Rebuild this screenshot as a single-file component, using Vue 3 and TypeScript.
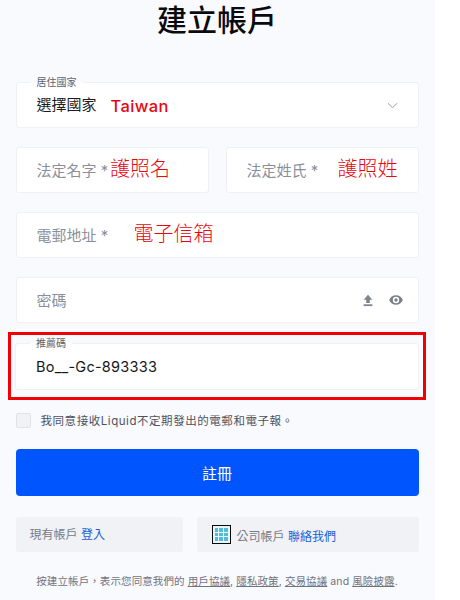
<script setup lang="ts">
const footerLinks: string[] = ['用戶協議', '隱私政策']
const windows: number[] = [0, 1, 2, 3, 4, 5, 6, 7, 8]
</script>

<template>
  <div class="page">
    <main class="form">
      <h1 class="title">建立帳戶</h1>

      <div class="field country">
        <span class="legend">居住國家</span>
        <span class="value label-w">選擇國家</span>
        <span class="note latin">Taiwan</span>
        <svg class="chevron" viewBox="0 0 12 7" width="11" height="7">
          <path d="M1 1l5 5 5-5" fill="none" stroke="#8f939c" stroke-width="1" />
        </svg>
      </div>

      <div class="row">
        <div class="field half">
          <span class="hint name-hint">法定名字 *</span>
          <span class="note big">護照名</span>
        </div>
        <div class="field half">
          <span class="hint surname-hint">法定姓氏 *</span>
          <span class="note big">護照姓</span>
        </div>
      </div>

      <div class="field email">
        <span class="hint email-hint">電郵地址 *</span>
        <span class="note big">電子信箱</span>
      </div>

      <div class="field password">
        <span class="hint">密碼</span>
        <svg class="upload" viewBox="0 0 10 13" width="10" height="13">
          <path d="M5 .8L.6 5.800h2.600V9h3.600V5.800h2.600z" fill="#80848f" />
          <rect x=".6" y="10.300" width="8.800" height="1.800" fill="#80848f" />
        </svg>
        <svg class="eye" viewBox="0 0 14 10" width="14" height="10">
          <path d="M7 .2C4 .2 1.400 2.200.2 5c1.200 2.800 3.800 4.800 6.800 4.800s5.600-2 6.800-4.800C12.600 2.200 10 .2 7 .2z" fill="#7a7e8a" />
          <circle cx="7" cy="5" r="3.200" fill="#fff" />
          <circle cx="7" cy="5" r="1.700" fill="#7a7e8a" />
        </svg>
      </div>

      <div class="highlight">
        <div class="field referral">
          <span class="legend">推薦碼</span>
          <span class="code">Bo__-Gc-893333</span>
        </div>
      </div>

      <label class="consent">
        <span class="box"></span>
        <span>我同意接收Liquid不定期發出的電郵和電子報。</span>
      </label>

      <button class="submit" type="button">註冊</button>

      <div class="cards">
        <div class="card login">
          <span>現有帳戶 <a class="link">登入</a></span>
        </div>
        <div class="card company">
          <span class="building">
            <i v-for="w in windows" :key="w" class="pane"></i>
          </span>
          <span class="company-text">公司帳戶 <a class="link">聯絡我們</a></span>
        </div>
      </div>

      <p class="terms">
        按建立帳戶，表示您同意我們的
        <template v-for="l in footerLinks" :key="l"><u>{{ l }}</u>, </template><u>交易協議</u> and <u>風險披露</u>.
      </p>
    </main>
  </div>
</template>

<style scoped>
.page {
  width: 435px;
  height: 600px;
  overflow: hidden;
  background: #f9fafd;
  font-family: Inter, "Noto Sans CJK TC", sans-serif;
}
.form {
  display: flex;
  flex-direction: column;
  padding: 0 16.500px 0 15.500px;
}
.title {
  margin: 0;
  height: 82px;
  padding-top: 1px;
  box-sizing: border-box;
  text-align: center;
  font-size: 30px;
  line-height: 38px;
  font-weight: 500;
  color: #0b0b0f;
}
.field {
  position: relative;
  display: flex;
  align-items: center;
  height: 46px;
  box-sizing: border-box;
  padding: 0 20px;
  background: #fff;
  border: 1px solid #f0f1f4;
  border-radius: 3px;
}
.legend {
  position: absolute;
  left: 14px;
  top: -7px;
  padding: 0 6px;
  font-size: 10px;
  line-height: 12px;
  color: #5f636d;
  background: linear-gradient(#f9fafd 50%, #fff 50%);
}
.country { margin-bottom: 19px; }
.value { font-size: 15px; color: #1a1c22; margin-top: -3px; }
.label-w { width: 74px; }
.note { color: #e8060f; white-space: nowrap; }
.latin { font-size: 16.500px; font-weight: 500; letter-spacing: .4px; margin-top: 1px; }
.big { font-size: 20px; line-height: 26px; margin-top: -3px; font-weight: 300; }
.chevron { margin-left: auto; margin-right: 0; }
.row {
  display: grid;
  grid-template-columns: 193px 193px;
  justify-content: space-between;
  margin-bottom: 19px;
}
.half { height: 46px; }
.hint { font-size: 15px; color: #8b8f9a; white-space: nowrap; margin-top: -2px; }
.name-hint { width: 73.500px; }
.surname-hint { width: 92px; }
.email { margin-bottom: 19px; }
.email-hint { width: 97px; }
.password { margin-bottom: 9px; }
.upload { margin-left: auto; margin-right: 16px; }
.eye { margin-right: -5px; }
.highlight {
  margin: 0 -7.500px;
  padding: 8px 4px 8px 4px;
  border: 3px solid #f00000;
  height: 68px;
  box-sizing: border-box;
}
.referral { height: 47px; }
.code { font-size: 14.500px; letter-spacing: .25px; color: #15171c; }
.consent {
  display: flex;
  align-items: center;
  gap: 10px;
  margin-top: 12px;
  font-size: 11.500px;
  color: #4e525c;
  letter-spacing: .55px;
}
.box {
  width: 15px;
  height: 15px;
  box-sizing: border-box;
  background: #f1f2f5;
  border: 1px solid #e0e2e7;
  border-radius: 2px;
}
.submit {
  height: 47px;
  margin-top: 21px;
  border: none;
  border-radius: 4px;
  background: #0055ff;
  color: #fff;
  font: inherit;
  font-size: 15px;
}
.cards {
  display: grid;
  grid-template-columns: 167px 222px;
  justify-content: space-between;
  margin-top: 21px;
}
.card {
  display: flex;
  align-items: center;
  height: 35px;
  background: #f1f2f6;
  border-radius: 3px;
  font-size: 12px;
  color: #777b86;
}
.login { padding-left: 14px; }
.login span { margin-top: -2px; }
.company { padding-left: 15px; gap: 6px; }
.company-text { margin-top: 1px; }
.link { color: #1a5fd8; }
.building {
  display: grid;
  grid-template-columns: repeat(3, 1fr);
  gap: 1px;
  width: 19px;
  height: 19px;
  box-sizing: border-box;
  padding: 2px;
  border: 1.500px solid #0a0a0a;
  background: #e6f6fb;
}
.pane { background: #55bcd8; }
.terms {
  margin: 21px 0 0;
  text-align: center;
  font-size: 10.500px;
  color: #6f737d;
  white-space: nowrap;
  letter-spacing: .1px;
}
</style>

<style>
html, body { background: #fff; }
</style>
